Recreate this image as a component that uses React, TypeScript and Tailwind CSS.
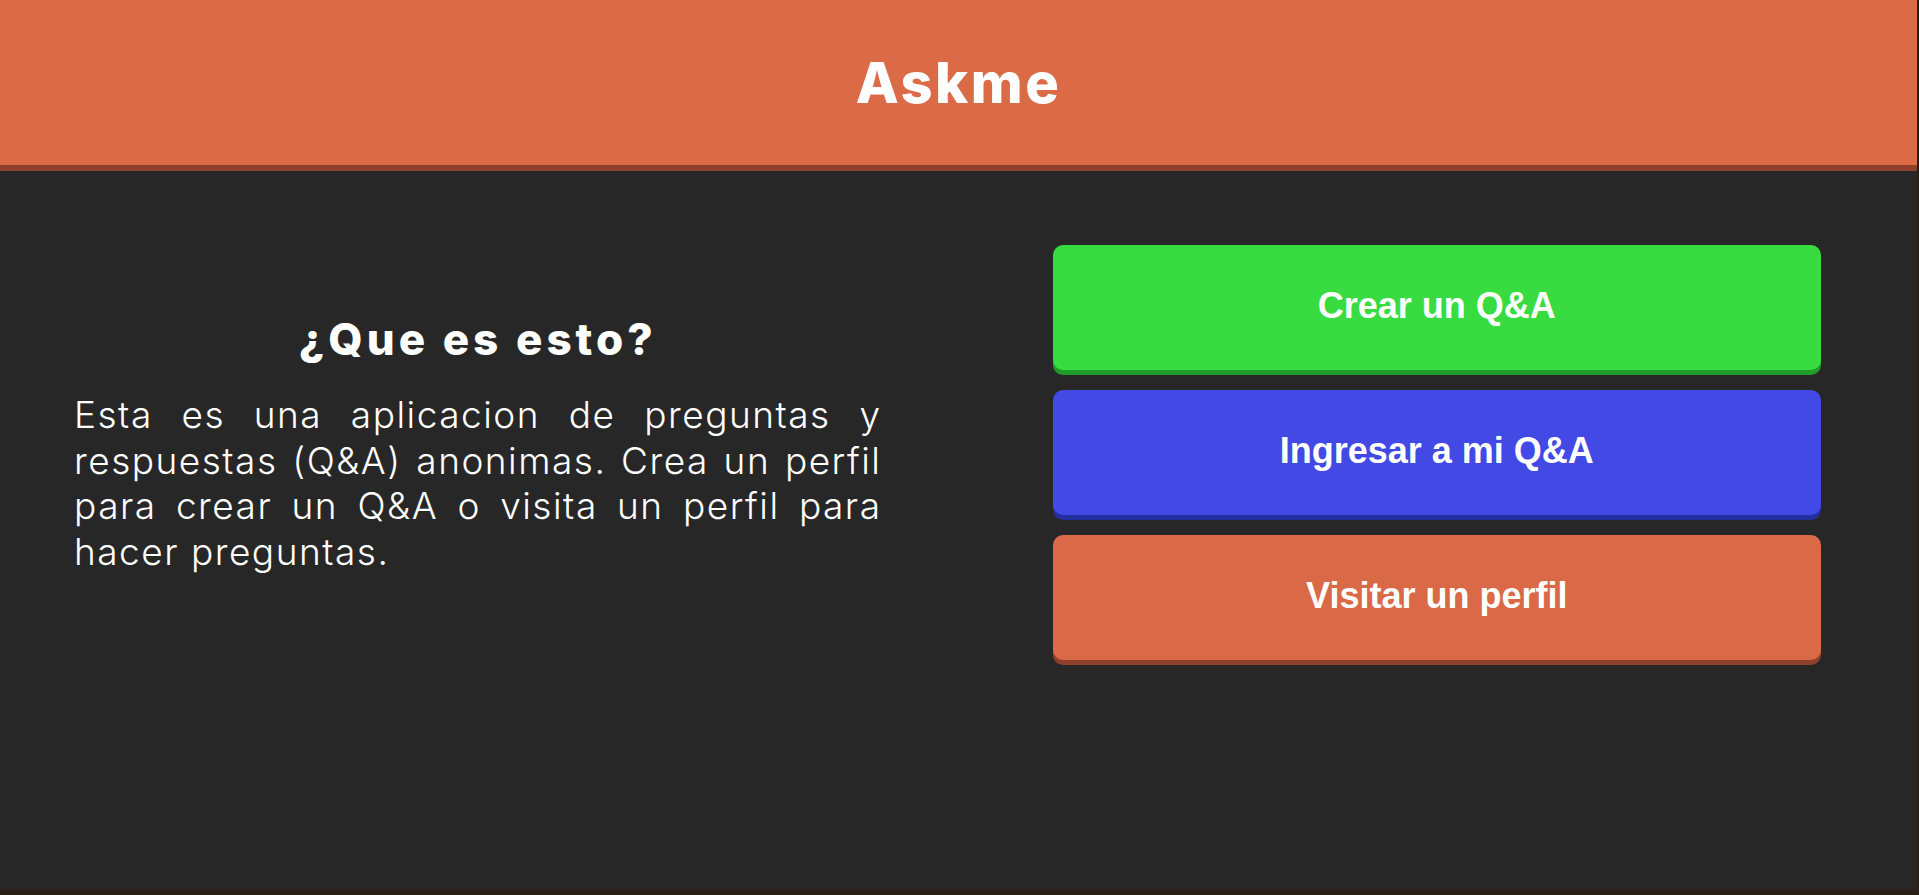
import React from "react"

const buttons = [
  { label: "Crear un Q&A", className: "bg-[#38dc40] shadow-[0_5px_0_#1f9b2a]" },
  { label: "Ingresar a mi Q&A", className: "bg-[#4249e5] shadow-[0_5px_0_#232f9c]" },
  { label: "Visitar un perfil", className: "bg-[#da6a47] shadow-[0_5px_0_#8e402c]" },
]

const lines = [
  "Esta es una aplicacion de preguntas y",
  "respuestas (Q&A) anonimas. Crea un perfil",
  "para crear un Q&A o visita un perfil para",
]

export default function App() {
  return (
    <div className="min-h-[895px] w-[1919px] bg-[#2a1f14]">
      <div className="flex h-[889px] w-[1917px] flex-col bg-[#272727]">
        <header className="flex h-[171px] shrink-0 items-center justify-center border-b-[6px] border-[#8f402d] bg-[#db6a47]">
          <h1 className="font-['Inter',sans-serif] text-[56px] font-extrabold leading-none tracking-[2.5px] text-white">
            Askme
          </h1>
        </header>

        <main className="grid flex-1 grid-cols-2">
          <section className="pl-[74px] pr-[77px] pt-[143px] font-['Inter',sans-serif] text-white">
            <h2 className="text-center text-[44px] font-extrabold leading-[50px] tracking-[4px]">
              ¿Que es esto?
            </h2>
            <p className="mt-[28px] text-[37px] font-light leading-[45.6px] tracking-[1.5px]">
              {lines.map((line) => (
                <span key={line} className="block text-justify [text-align-last:justify]">
                  {line}
                </span>
              ))}
              <span className="block">hacer preguntas.</span>
            </p>
          </section>

          <section className="flex flex-col gap-[20px] pl-[94px] pr-[96px] pt-[74px]">
            {buttons.map((b) => (
              <button
                key={b.label}
                className={`flex h-[125px] w-full items-center justify-center rounded-[10px] pb-[4px] font-['Liberation_Sans',Arial,sans-serif] text-[36px] font-bold text-white ${b.className}`}
              >
                {b.label}
              </button>
            ))}
          </section>
        </main>
      </div>
    </div>
  )
}
